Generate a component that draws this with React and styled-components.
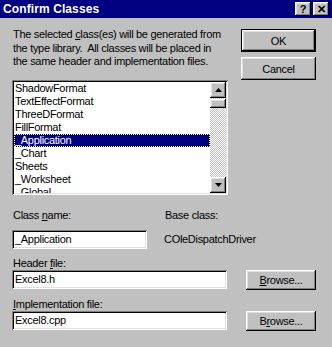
import React from "react";
import styled, { createGlobalStyle, css } from "styled-components";

const Global = createGlobalStyle`
  html, body { margin: 0; padding: 0; background: #c0c0c0; }
  body { font-family: "Liberation Sans", Arial, sans-serif; font-size: 11px; color: #000; letter-spacing: -0.3px; }
`;

const Window = styled.div`
  width: 332px;
  height: 347px;
  background: #c0c0c0;
  display: flex;
  flex-direction: column;
  overflow: hidden;
`;

const TitleBar = styled.div`
  height: 18px;
  background: #000080;
  display: flex;
  align-items: center;
  padding: 0 3px 0 3px;
  flex-shrink: 0;
`;

const Title = styled.div`
  flex: 1;
  color: #fff;
  font-weight: bold;
  font-size: 12px;
  letter-spacing: 0.1px;
`;

const raised = css`
  background: #c0c0c0;
  box-shadow: inset -1px -1px 0 #000, inset 1px 1px 0 #fff, inset -2px -2px 0 #808080, inset 2px 2px 0 #dfdfdf;
`;

const CaptionButton = styled.div`
  ${raised}
  width: 16px;
  height: 14px;
  margin-left: ${(p) => p.$gap || 0}px;
  display: flex;
  align-items: center;
  justify-content: center;
  font-weight: bold;
  font-size: 11px;
  line-height: 14px;
  letter-spacing: 0;
  box-sizing: border-box;
  padding-bottom: 1px;
`;

const Body = styled.div`
  display: flex;
  flex-direction: column;
  padding: 10px 16px 0 12px;
`;

const TopRow = styled.div`
  display: flex;
  justify-content: space-between;
`;

const LeftCol = styled.div`
  width: 216px;
  display: flex;
  flex-direction: column;
`;

const RightCol = styled.div`
  width: 75px;
  display: flex;
  flex-direction: column;
  gap: 5px;
  padding-top: 1px;
`;

const Desc = styled.p`
  margin: 0 0 0 1px;
  line-height: 13.5px;
  white-space: nowrap;
`;

const U = styled.span`
  text-decoration: underline;
`;

const Button = styled.div`
  ${raised}
  height: ${(p) => p.$h || 23}px;
  width: ${(p) => p.$w || 75}px;
  flex-shrink: 0;
  box-sizing: border-box;
  display: flex;
  align-items: center;
  justify-content: center;
  ${(p) =>
    p.$default &&
    css`
      box-shadow: inset 0 0 0 1px #000, inset -2px -2px 0 #000, inset 2px 2px 0 #fff, inset -3px -3px 0 #808080, inset 3px 3px 0 #dfdfdf;
    `}
`;

const sunken = css`
  background: #fff;
  box-shadow: inset 1px 1px 0 #808080, inset -1px -1px 0 #fff, inset 2px 2px 0 #000, inset -2px -2px 0 #dfdfdf;
`;

const ListBox = styled.div`
  ${sunken}
  margin-top: 11px;
  height: 115px;
  box-sizing: border-box;
  padding: 2px;
  display: flex;
  overflow: hidden;
`;

const Items = styled.div`
  flex: 1;
  overflow: hidden;
`;

const Item = styled.div`
  height: 13px;
  line-height: 13px;
  padding-left: 1px;
  white-space: nowrap;
  ${(p) =>
    p.$selected &&
    css`
      background: #000080;
      color: #fff;
      outline: 1px dotted #ffff80;
      outline-offset: -1px;
    `}
`;

const ScrollBar = styled.div`
  width: 16px;
  display: flex;
  flex-direction: column;
  background: repeating-conic-gradient(#c0c0c0 0 25%, #fff 0 50%) 0 0 / 2px 2px;
`;

const ScrollBtn = styled.div`
  ${raised}
  width: 16px;
  height: ${(p) => p.$h || 16}px;
  flex-shrink: 0;
  display: flex;
  align-items: center;
  justify-content: center;
  margin-top: ${(p) => p.$mt || 0}px;
`;

const Spacer = styled.div`
  flex: 1;
`;

const Arrow = ({ down }) => (
  <svg width="7" height="4" viewBox="0 0 7 4" style={{ display: "block" }}>
    <polygon points={down ? "0,0 7,0 3.5,4" : "0,4 7,4 3.5,0"} fill="#000" />
  </svg>
);

const LabelRow = styled.div`
  display: flex;
  height: 13px;
  line-height: 13px;
  margin-top: ${(p) => p.$mt || 0}px;
`;

const Label = styled.div`
  width: ${(p) => p.$w || "auto"};
  padding-left: 1px;
  white-space: nowrap;
`;

const FieldRow = styled.div`
  display: flex;
  align-items: center;
  margin-top: ${(p) => p.$mt || 0}px;
`;

const Input = styled.div`
  ${sunken}
  width: ${(p) => p.$w}px;
  height: 19px;
  box-sizing: border-box;
  padding: 2px 3px;
  line-height: 15px;
  white-space: nowrap;
  flex-shrink: 0;
`;

const Static = styled.div`
  margin-left: ${(p) => p.$ml || 0}px;
  white-space: nowrap;
`;

const items = [
  "ShadowFormat",
  "TextEffectFormat",
  "ThreeDFormat",
  "FillFormat",
  "_Application",
  "_Chart",
  "Sheets",
  "_Worksheet",
  "_Global",
];

export default function App() {
  return (
    <>
      <Global />
      <Window>
        <TitleBar>
          <Title>Confirm Classes</Title>
          <CaptionButton>?</CaptionButton>
          <CaptionButton $gap={2}>✕</CaptionButton>
        </TitleBar>
        <Body>
          <TopRow>
            <LeftCol>
              <Desc>
                The selected <U>c</U>lass(es) will be generated from
                <br />
                the type library.&nbsp; All classes will be placed in
                <br />
                the same header and implementation files.
              </Desc>
              <ListBox>
                <Items>
                  {items.map((it) => (
                    <Item key={it} $selected={it === "_Application"}>
                      {it}
                    </Item>
                  ))}
                </Items>
                <ScrollBar>
                  <ScrollBtn>
                    <Arrow />
                  </ScrollBtn>
                  <ScrollBtn $h={9} $mt={1} />
                  <Spacer />
                  <ScrollBtn>
                    <Arrow down />
                  </ScrollBtn>
                </ScrollBar>
              </ListBox>
            </LeftCol>
            <RightCol>
              <Button $default>OK</Button>
              <Button>Cancel</Button>
            </RightCol>
          </TopRow>

          <LabelRow $mt={14}>
            <Label $w="151px">
              Class <U>n</U>ame:
            </Label>
            <Label>Base class:</Label>
          </LabelRow>
          <FieldRow $mt={8}>
            <Input $w={135}>_Application</Input>
            <Static $ml={17}>COleDispatchDriver</Static>
          </FieldRow>

          <LabelRow $mt={8}>
            <Label>
              Header <U>f</U>ile:
            </Label>
          </LabelRow>
          <FieldRow $mt={0}>
            <Input $w={215}>Excel8.h</Input>
            <Spacer />
            <Button $w={70} $h={20}>
              <span>
                <U>B</U>rowse...
              </span>
            </Button>
          </FieldRow>

          <LabelRow $mt={8}>
            <Label>
              <U>I</U>mplementation file:
            </Label>
          </LabelRow>
          <FieldRow $mt={0}>
            <Input $w={215}>Excel8.cpp</Input>
            <Spacer />
            <Button $w={70} $h={20}>
              <span>
                B<U>r</U>owse...
              </span>
            </Button>
          </FieldRow>
        </Body>
      </Window>
    </>
  );
}
